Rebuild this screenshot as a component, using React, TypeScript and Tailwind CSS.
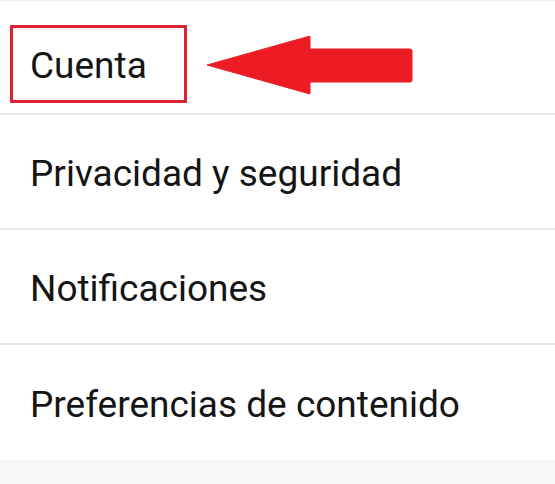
const items = ["Privacidad y seguridad", "Notificaciones", "Preferencias de contenido"];

function Arrow() {
  return (
    <svg width="206" height="60" viewBox="0 0 206 60" className="ml-[20px] mt-[18px] shrink-0">
      <path d="M0 29 L103 0 L103 13 L203 13 Q205 13 205 15 L205 44 Q205 46 203 46 L103 46 L103 58 Z" fill="#ed1c24" strokeLinejoin="round" stroke="#ed1c24" strokeWidth="1" />
    </svg>
  );
}

export default function App() {
  return (
    <div className="w-[555px] h-[484px] bg-white font-['Roboto',sans-serif] text-[#151515] flex flex-col overflow-hidden">
      <div className="h-px bg-[#ececec]" />
      <div className="h-[114px] border-b-2 border-[#e8e8e8] flex items-center pl-[10px]">
        <div className="w-[177px] h-[78px] border-[3px] border-[#dc222e] flex items-center pl-[17px] pt-[2px] mt-[14px]">
          <span className="text-[37px] leading-none">Cuenta</span>
        </div>
        <Arrow />
      </div>
      {items.map((label, i) => (
        <div
          key={label}
          className={
            "h-[115px] flex items-center pl-[30px] pt-[4px] " +
            (i < items.length - 1 ? "border-b-2 border-[#e8e8e8]" : "")
          }
        >
          <span className="text-[37px] leading-none">{label}</span>
        </div>
      ))}
      <div className="flex-1 bg-[#f5f7f8]" />
    </div>
  );
}
